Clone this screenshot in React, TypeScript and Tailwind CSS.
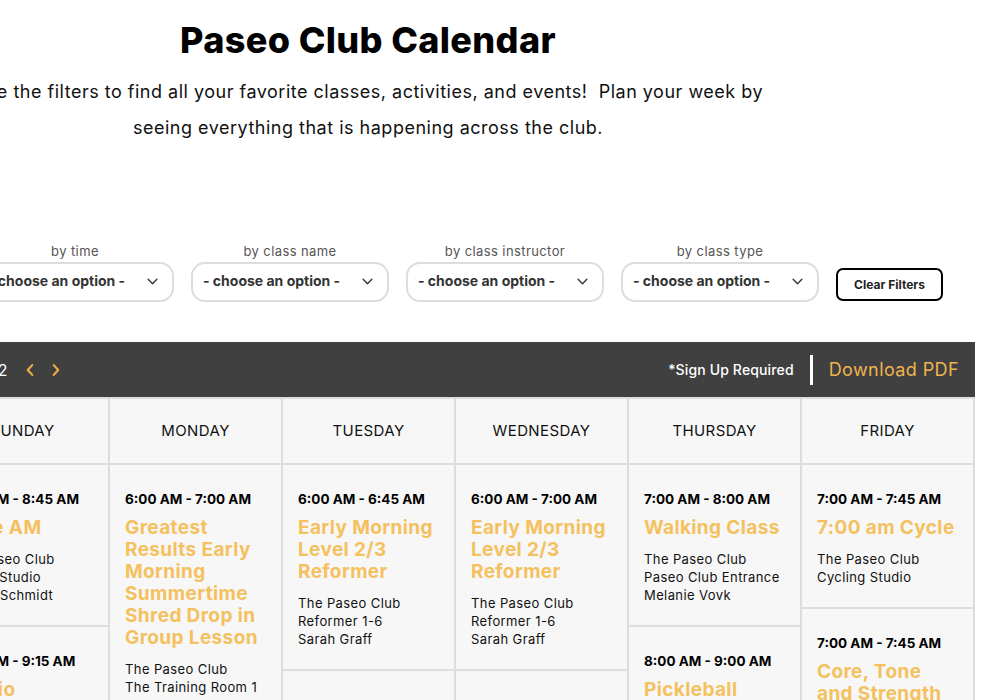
import { FC } from "react";

type CalEvent = {
  time: string;
  title: string;
  details: string[];
};

type DayColumn = {
  name: string;
  events: CalEvent[];
};

const days: DayColumn[] = [
  {
    name: "Sunday",
    events: [
      { time: "8:00 AM - 8:45 AM", title: "Barre AM", details: ["The Paseo Club", "Pilates Studio", "Rachel Schmidt"] },
      { time: "8:30 AM - 9:15 AM", title: "Cardio", details: ["The Paseo Club", "Group Studio", "Rachel Schmidt"] },
    ],
  },
  {
    name: "Monday",
    events: [
      {
        time: "6:00 AM - 7:00 AM",
        title: "Greatest Results Early Morning Summertime Shred Drop in Group Lesson",
        details: ["The Paseo Club", "The Training Room 1", "Holly Hunt"],
      },
    ],
  },
  {
    name: "Tuesday",
    events: [
      { time: "6:00 AM - 6:45 AM", title: "Early Morning Level 2/3 Reformer", details: ["The Paseo Club", "Reformer 1-6", "Sarah Graff"] },
      { time: "7:00 AM - 7:45 AM", title: "Reformer Flow", details: ["The Paseo Club", "Reformer 1-6", "Sarah Graff"] },
    ],
  },
  {
    name: "Wednesday",
    events: [
      { time: "6:00 AM - 7:00 AM", title: "Early Morning Level 2/3 Reformer", details: ["The Paseo Club", "Reformer 1-6", "Sarah Graff"] },
      { time: "7:00 AM - 7:45 AM", title: "Reformer Flow", details: ["The Paseo Club", "Reformer 1-6", "Sarah Graff"] },
    ],
  },
  {
    name: "Thursday",
    events: [
      { time: "7:00 AM - 8:00 AM", title: "Walking Class", details: ["The Paseo Club", "Paseo Club Entrance", "Melanie Vovk"] },
      { time: "8:00 AM - 9:00 AM", title: "Pickleball", details: ["The Paseo Club", "Pickleball Courts"] },
    ],
  },
  {
    name: "Friday",
    events: [
      { time: "7:00 AM - 7:45 AM", title: "7:00 am Cycle", details: ["The Paseo Club", "Cycling Studio"] },
      { time: "7:00 AM - 7:45 AM", title: "Core, Tone and Strength", details: ["The Paseo Club", "Group Studio"] },
    ],
  },
];

const filters = ["by time", "by class name", "by class instructor", "by class type"];

const Chevron: FC<{ dir: "left" | "right" | "down"; className?: string }> = ({ dir, className }) => {
  const d = dir === "left" ? "M7 1 L2 6.5 L7 12" : dir === "right" ? "M2 1 L7 6.5 L2 12" : "M1 1.5 L6 6.5 L11 1.5";
  const box = dir === "down" ? "0 0 12 8" : "0 0 9 13";
  return (
    <svg viewBox={box} className={className} fill="none" stroke="currentColor" strokeLinecap="round" strokeLinejoin="round">
      <path d={d} />
    </svg>
  );
};

const EventCell: FC<{ ev: CalEvent }> = ({ ev }) => (
  <div className="border-b-2 border-[#dddddd] px-[15px] pt-[23px] pb-[21px]">
    <div className="text-[13.5px] font-bold leading-[22px] tracking-normal text-black">{ev.time}</div>
    <div className="mt-[7px] text-[19px] font-bold leading-[22px] tracking-[0.02em] text-[#f4c15e]">{ev.title}</div>
    <div className="mt-[11px] text-[13px] leading-[18px] text-[#111]">
      {ev.details.map((d) => (
        <div key={d}>{d}</div>
      ))}
    </div>
  </div>
);

export default function App() {
  return (
    <div className="h-[700px] w-[990px] overflow-hidden bg-white font-['Inter',sans-serif] tracking-[0.025em]">
      <div className="-ml-[65px] w-[1040px]">
        {/* heading */}
        <div className="w-[866px] pt-[18px] text-center">
          <h1 className="text-[36px] font-extrabold leading-[44px] tracking-[0.01em] text-black">Paseo Club Calendar</h1>
          <p className="mx-auto mt-[12px] max-w-[820px] text-[18px] leading-[36px] tracking-[0.028em] text-[#111]">
            Use the filters to find all your favorite classes, activities, and events!&nbsp; Plan your week by seeing
            everything that is happening across the club.
          </p>
        </div>

        {/* filters */}
        <div className="mt-[96px] ml-[41px] flex items-end gap-[17px]">
          {filters.map((f) => (
            <div key={f} className="flex w-[198px] flex-col items-center">
              <label className="text-[13px] leading-[18px] text-[#555]">{f}</label>
              <div className="mt-[2px] flex h-[40px] w-full items-center justify-between rounded-[14px] border-2 border-[#dddddd] bg-white pb-[3px] pl-[10px] pr-[14px]">
                <span className="text-[14px] font-bold tracking-normal text-[#333]">- choose an option -</span>
                <Chevron dir="down" className="mt-[2px] h-[7px] w-[11px] stroke-[1.6] text-[#333]" />
              </div>
            </div>
          ))}
          <button className="mb-[1px] h-[33px] w-[107px] rounded-[7px] border-2 border-black bg-white text-[12px] font-bold tracking-normal text-[#222]">
            Clear Filters
          </button>
        </div>

        {/* calendar toolbar */}
        <div className="mt-[40px] flex h-[55px] items-center justify-between bg-[#404040] pr-[16px]">
          <div className="flex w-[125px] items-center justify-end gap-[18px]">
            <span className="whitespace-nowrap text-[16px] text-white">July 10 - July 16, 2022</span>
            <div className="flex items-center gap-[18px] text-[#f0ad45]">
              <Chevron dir="left" className="h-[12px] w-[8px] stroke-[2.4]" />
              <Chevron dir="right" className="h-[12px] w-[8px] stroke-[2.4]" />
            </div>
          </div>
          <div className="flex items-center">
            <span className="text-[14px] font-medium tracking-[0.01em] text-white">*Sign Up Required</span>
            <span className="ml-[16px] mr-[16px] h-[30px] w-[3px] bg-white" />
            <span className="text-[18px] text-[#f0b44c]">Download PDF</span>
          </div>
        </div>

        {/* calendar grid */}
        <div className="grid grid-cols-6 gap-[2px] bg-[#dddddd] px-[2px] pt-[2px]">
          {days.map((d) => (
            <div key={d.name} className="flex h-[64px] items-center justify-center bg-[#f7f7f7] text-[15px] uppercase text-[#111]">
              {d.name}
            </div>
          ))}
          {days.map((d) => (
            <div key={d.name + "-col"} className="flex flex-col bg-[#f7f7f7]">
              {d.events.map((ev, i) => (
                <EventCell key={i} ev={ev} />
              ))}
            </div>
          ))}
        </div>
      </div>
    </div>
  );
}
